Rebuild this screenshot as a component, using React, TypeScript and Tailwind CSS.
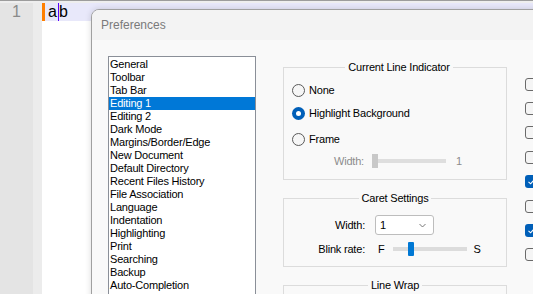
import React from "react";

const pages = [
  "General",
  "Toolbar",
  "Tab Bar",
  "Editing 1",
  "Editing 2",
  "Dark Mode",
  "Margins/Border/Edge",
  "New Document",
  "Default Directory",
  "Recent Files History",
  "File Association",
  "Language",
  "Indentation",
  "Highlighting",
  "Print",
  "Searching",
  "Backup",
  "Auto-Completion",
];

const sideChecks = [false, false, false, false, true, false, true, false];

function Radio({ checked, label }: { checked?: boolean; label: string }) {
  return (
    <div className="flex h-[16px] items-center">
      {checked ? (
        <span className="flex h-[13px] w-[13px] items-center justify-center rounded-full bg-[#005fb8]">
          <span className="h-[5px] w-[5px] rounded-full bg-white" />
        </span>
      ) : (
        <span className="h-[13px] w-[13px] rounded-full border border-[#5a5a5a] bg-[#f6f6f6]" />
      )}
      <span className="ml-[4px]">{label}</span>
    </div>
  );
}

function Checkbox({ checked }: { checked: boolean }) {
  return checked ? (
    <span className="flex h-[13px] w-[13px] items-center justify-center rounded-[3px] bg-[#005fb8]">
      <svg width="9" height="9" viewBox="0 0 9 9" fill="none">
        <path d="M1.5 4.8 3.6 6.8 7.6 2.4" stroke="white" strokeWidth="1.1" />
      </svg>
    </span>
  ) : (
    <span className="h-[13px] w-[13px] rounded-[3px] border border-[#6a6a6a] bg-[#f5f5f5]" />
  );
}

export default function App() {
  return (
    <div className="relative h-[294px] w-[533px] overflow-hidden bg-white font-['Liberation_Sans',Arial,sans-serif]">
      {/* Editor behind the dialog */}
      <div className="h-[1px] bg-[#9c9c9c]" />
      <div className="h-[2px] bg-[#eeeeee]" />
      <div className="flex h-[291px]">
        <div className="w-[33px] bg-[#e4e4e4] pl-[12px] text-[16px] leading-[18px] text-[#8a8a8a]">1</div>
        <div className="w-[9px] bg-[#ececec]" />
        <div className="flex-1">
          <div className="flex h-[18px] bg-[#e8e8fa]">
            <div className="w-[3px] bg-[#ff7f00]" />
            <div className="flex pl-[3px] text-[16px] leading-[18px] text-black">
              <span>a</span>
              <span className="ml-[1px] w-[1px] bg-[#5a00ff]" />
              <span>b</span>
            </div>
          </div>
        </div>
      </div>

      {/* Preferences dialog */}
      <div className="absolute left-[91px] top-[9px] h-[300px] w-[470px] overflow-hidden rounded-t-[8px] border border-[#a0a0a0] bg-[#f9f9f9] shadow-[0_0_6px_rgba(0,0,0,0.15)]">
        <div className="flex h-[30px] items-center bg-[#f3f3f3] pl-[9px] text-[12px] text-[#7a7a7a]">
          Preferences
        </div>
        <div className="flex pl-[16px] pt-[16px] text-[11px] tracking-[-0.2px] text-black">
          {/* Page list */}
          <div className="h-[260px] w-[148px] border border-[#8a8f98] bg-white pt-[1px]">
            {pages.map((p) => (
              <div
                key={p}
                className={
                  p === "Editing 1"
                    ? "h-[13px] bg-[#0078d7] pl-[1px] leading-[13px] text-white"
                    : "h-[13px] pl-[1px] leading-[13px]"
                }
              >
                {p}
              </div>
            ))}
          </div>

          {/* Groups */}
          <div className="ml-[27px] mt-[5px] flex w-[224px] flex-col gap-[12px]">
            <fieldset className="border border-[#dcdcdc] pb-[11px] pl-[8px]">
              <legend className="mx-auto px-[3px] leading-[13px]">Current Line Indicator</legend>
              <div className="mt-[8px]">
                <Radio label="None" />
              </div>
              <div className="mt-[7px]">
                <Radio checked label="Highlight Background" />
              </div>
              <div className="mt-[10px]">
                <Radio label="Frame" />
              </div>
              <div className="mt-[7px] flex h-[14px] items-center text-[#8c8c8c]">
                <span className="ml-[42px]">Width:</span>
                <div className="relative ml-[8px] flex h-[14px] w-[74px] items-center">
                  <div className="h-[4px] w-full bg-[#dedede]" />
                  <div className="absolute left-0 top-0 h-[14px] w-[6px] bg-[#c8c8c8]" />
                </div>
                <span className="ml-[10px]">1</span>
              </div>
            </fieldset>

            <fieldset className="border border-[#dcdcdc] pb-[10px]">
              <legend className="mx-auto px-[3px] leading-[13px]">Caret Settings</legend>
              <div className="mt-[10px] flex items-center">
                <span className="w-[81px] text-right">Width:</span>
                <div className="ml-[10px] flex h-[20px] w-[59px] items-center justify-between rounded-[3px] border border-[#bdbdbd] bg-white pl-[4px] pr-[7px]">
                  <span>1</span>
                  <svg width="7" height="5" viewBox="0 0 7 5" fill="none">
                    <path d="M0.5 1 3.5 4 6.5 1" stroke="#6a6a6a" strokeWidth="0.9" />
                  </svg>
                </div>
              </div>
              <div className="mt-[7px] flex h-[14px] items-center">
                <span className="w-[81px] text-right">Blink rate:</span>
                <span className="ml-[13px]">F</span>
                <div className="relative ml-[8px] flex h-[14px] w-[74px] items-center">
                  <div className="h-[4px] w-full bg-[#dcdcdc]" />
                  <div className="absolute left-[15px] top-0 h-[14px] w-[6px] rounded-[1px] bg-[#0078d4]" />
                </div>
                <span className="ml-[7px]">S</span>
              </div>
            </fieldset>

            <fieldset className="h-[40px] border border-[#dcdcdc]">
              <legend className="mx-auto px-[3px] leading-[13px]">Line Wrap</legend>
            </fieldset>
          </div>

          {/* Checkbox column */}
          <div className="ml-[18px] mt-[16px] flex flex-col">
            {sideChecks.map((c, i) => (
              <div key={i} className="flex h-[24.4px] items-center">
                <Checkbox checked={c} />
              </div>
            ))}
          </div>
        </div>
      </div>
    </div>
  );
}
